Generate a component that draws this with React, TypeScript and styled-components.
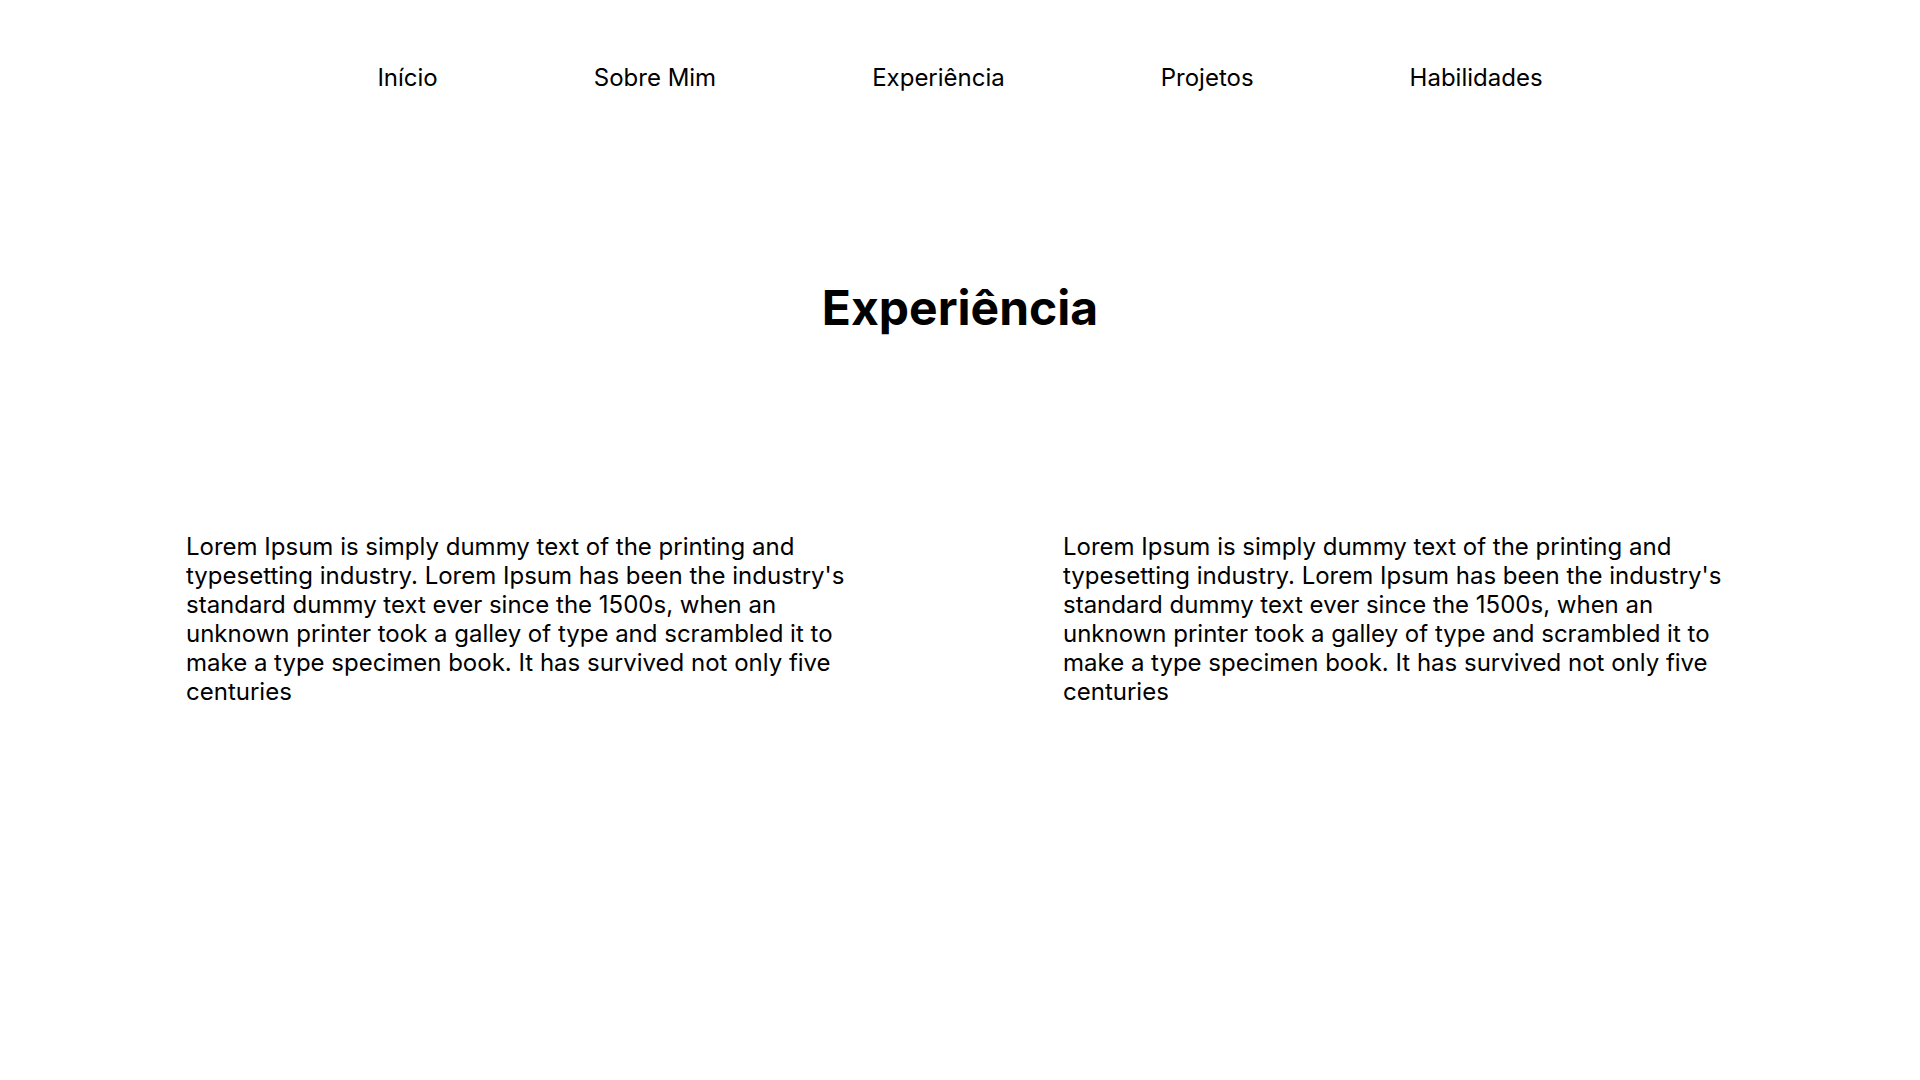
import React from "react";
import styled, { createGlobalStyle } from "styled-components";

const GlobalStyle = createGlobalStyle`
  html, body {
    margin: 0;
    padding: 0;
    background: #ffffff;
  }
  body {
    font-family: Inter, "Noto Sans", sans-serif;
    color: #000000;
  }
`;

const Page = styled.div`
  width: 1920px;
  min-height: 1080px;
  display: flex;
  flex-direction: column;
  align-items: center;
`;

const Nav = styled.nav`
  display: flex;
  justify-content: center;
  gap: 156px;
  padding-top: 63px;
`;

const NavLink = styled.a`
  font-family: Inter, sans-serif;
  font-size: 24px;
  font-weight: 400;
  line-height: 29px;
  color: #000000;
  text-decoration: none;
`;

const Heading = styled.h1`
  margin: 187px 0 0;
  font-family: Inter, sans-serif;
  font-size: 48px;
  font-weight: 700;
  line-height: 58px;
  text-align: center;
`;

const Columns = styled.section`
  box-sizing: border-box;
  width: 100%;
  padding: 0 186px;
  margin-top: 195px;
  display: grid;
  grid-template-columns: 1fr 1fr;
  column-gap: 206px;
`;

const Paragraph = styled.p`
  margin: 0;
  font-family: Inter, sans-serif;
  font-size: 24px;
  font-weight: 400;
  line-height: 29px;
  color: #000000;
`;

const links = ["Início", "Sobre Mim", "Experiência", "Projetos", "Habilidades"];

const lorem =
  "Lorem Ipsum is simply dummy text of the printing and typesetting industry. Lorem Ipsum has been the industry's standard dummy text ever since the 1500s, when an unknown printer took a galley of type and scrambled it to make a type specimen book. It has survived not only five centuries";

export default function App() {
  return (
    <>
      <GlobalStyle />
      <Page>
        <Nav>
          {links.map((l) => (
            <NavLink key={l} href="#">
              {l}
            </NavLink>
          ))}
        </Nav>
        <Heading>Experiência</Heading>
        <Columns>
          <Paragraph>{lorem}</Paragraph>
          <Paragraph>{lorem}</Paragraph>
        </Columns>
      </Page>
    </>
  );
}
